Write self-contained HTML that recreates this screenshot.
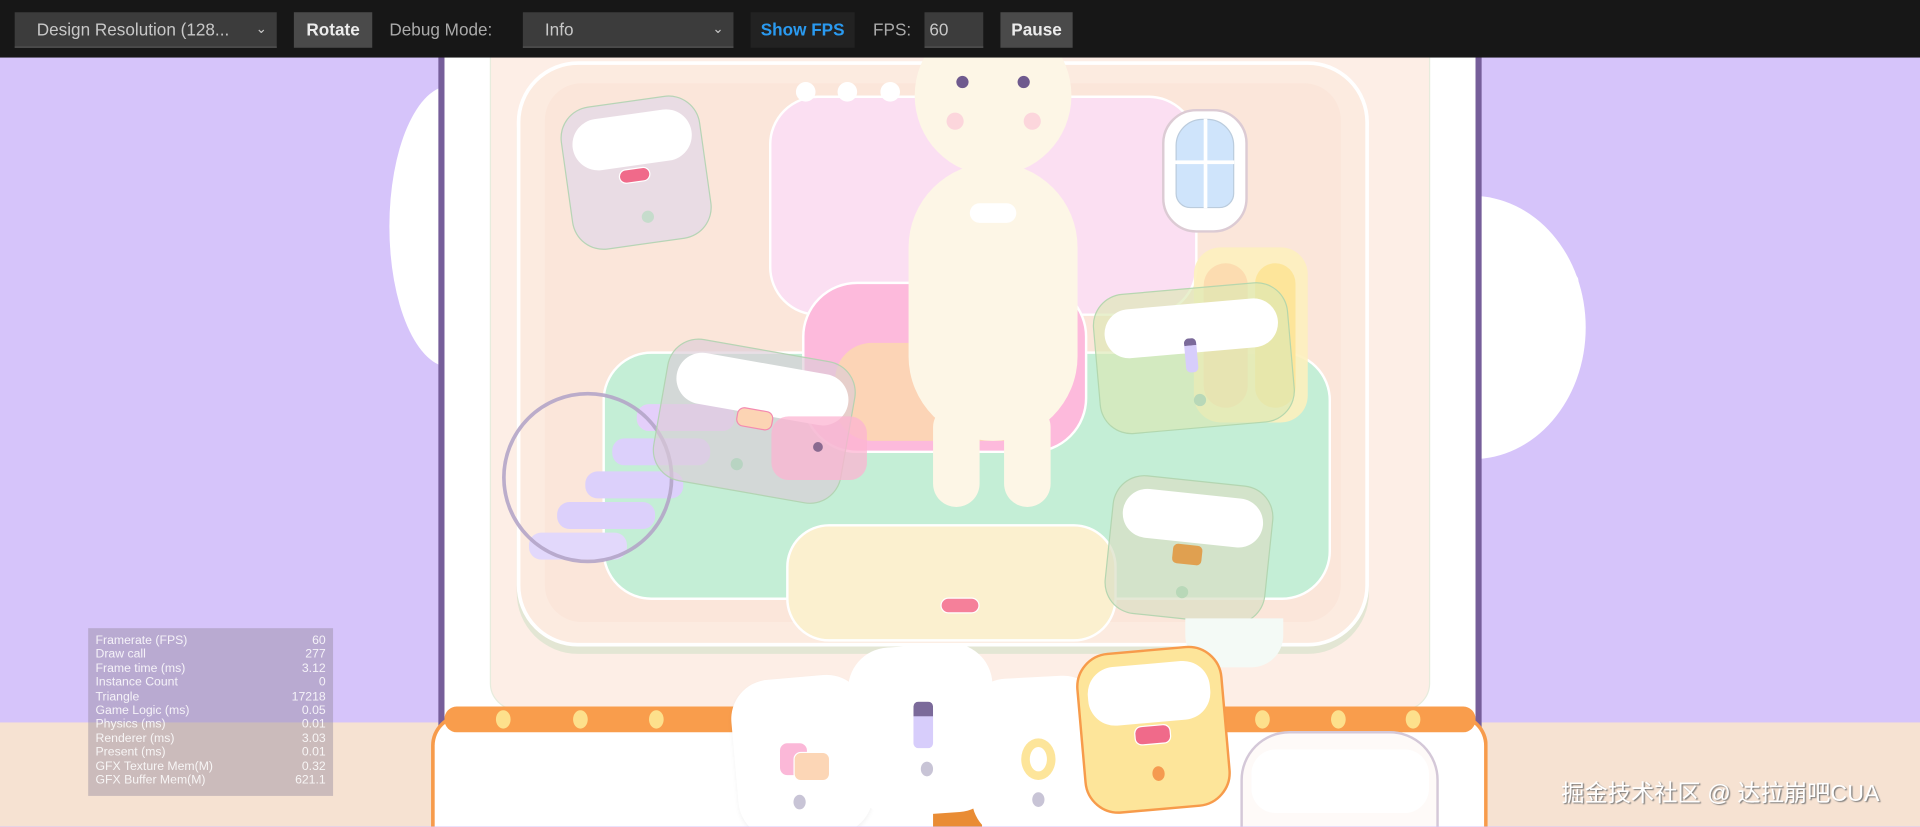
<!DOCTYPE html>
<html><head><meta charset="utf-8"><style>
*{margin:0;padding:0;box-sizing:border-box}
html,body{width:1920px;height:827px;overflow:hidden;background:#d6c4fa}
#w{position:absolute;left:0;top:0;width:1568px;height:675px;transform:scale(1.22449);transform-origin:0 0;overflow:hidden;font-family:"Liberation Sans",sans-serif}
.a{position:absolute}
.tb{left:0;top:0;width:1568px;height:47px;background:#171717}
.sel{background:#3c3c3c;color:#c8c8c8;font-size:14px;line-height:29px;padding-left:18px;height:29px;top:10px;border-bottom:1px solid #555}
.btn{background:#4a4a4a;color:#ececec;font-weight:bold;font-size:14px;line-height:29px;text-align:center;height:29px;top:10px}
.lbl{color:#aaa;font-size:14px;top:16px}
.card{position:absolute;border-radius:26px;border:1.5px solid rgba(170,210,170,.8)}
.pill{position:absolute;background:#fff;border-radius:22px}
.dot{position:absolute;border-radius:50%}
.stats{left:72px;top:513px;width:200px;height:137px;background:rgba(150,140,160,.45);color:rgba(255,255,255,.85);font-size:10px;line-height:11.4px;padding:5px 6px}
.stats div{display:flex;justify-content:space-between}
</style></head><body><div id="w">
<div class="a" style="left:0;top:590px;width:1568px;height:85px;background:#f6e2d2"></div>
<div class="a" style="left:318px;top:70px;width:100px;height:230px;border-radius:50%;background:#fff"></div>
<div class="a" style="left:1110px;top:160px;width:185px;height:215px;border-radius:50%;background:#fff"></div>
<div class="dot" style="left:1279px;top:224px;width:10px;height:10px;background:#fff"></div>
<div class="a" style="left:358px;top:40px;width:852px;height:560px;background:#765e9a"></div>
<div class="a" style="left:363px;top:40px;width:842px;height:560px;background:#fff"></div>
<div class="a" style="left:400px;top:40px;width:768px;height:540px;background:#fdeee6;border-radius:0 0 22px 22px;border:1px solid #e6ecdd"></div>
<div class="a" style="left:422px;top:50px;width:696px;height:478px;background:#fcebe0;border-radius:50px;border:3px solid #fff;box-shadow:0 6px 0 #e3e6d4"></div>
<div class="a" style="left:445px;top:68px;width:650px;height:440px;background:#fbe6da;border-radius:30px"></div>
<div class="a" style="left:628px;top:78px;width:350px;height:180px;background:#fbdff2;border-radius:40px;border:2px solid #fff"></div>
<div class="dot" style="left:650px;top:67px;width:16px;height:16px;background:#fff"></div>
<div class="dot" style="left:684px;top:67px;width:16px;height:16px;background:#fff"></div>
<div class="dot" style="left:719px;top:67px;width:16px;height:16px;background:#fff"></div>
<div class="a" style="left:492px;top:287px;width:595px;height:203px;background:#c4eed6;border-radius:40px;border:2px solid #fff"></div>
<div class="a" style="left:655px;top:230px;width:233px;height:140px;background:#fdbadc;border-radius:45px;border:2px solid #fff"></div>
<div class="a" style="left:682px;top:280px;width:175px;height:80px;background:#fcd4b6;border-radius:30px"></div>
<div class="a" style="left:642px;top:428px;width:270px;height:96px;background:#fbf0cf;border-radius:35px;border:2px solid #fff"></div>
<div class="a" style="left:768px;top:488px;width:32px;height:13px;background:#f5809a;border-radius:7px;border:1.5px solid #fff"></div>
<div class="a" style="left:949px;top:89px;width:70px;height:101px;background:#fff;border-radius:28px;border:2px solid #dccbd4"></div>
<div class="a" style="left:960px;top:97px;width:48px;height:73px;background:#cfe4fb;border-radius:22px 22px 12px 12px;border:1px solid #bcd"></div>
<div class="a" style="left:983px;top:97px;width:3px;height:73px;background:#fff"></div>
<div class="a" style="left:960px;top:131px;width:48px;height:3px;background:#fff"></div>
<div class="a" style="left:975px;top:202px;width:93px;height:143px;background:rgba(253,240,190,.9);border-radius:22px"></div>
<div class="a" style="left:983px;top:215px;width:36px;height:118px;background:#fcdcb0;border-radius:18px"></div>
<div class="a" style="left:1025px;top:215px;width:33px;height:118px;background:#fde59a;border-radius:18px"></div>
<div class="a" style="left:520px;top:330px;width:80px;height:22px;background:#e4cffa;border-radius:10px"></div>
<div class="a" style="left:500px;top:358px;width:80px;height:22px;background:#dcd0fb;border-radius:10px"></div>
<div class="a" style="left:478px;top:385px;width:80px;height:22px;background:#dcd0fb;border-radius:10px"></div>
<div class="a" style="left:455px;top:410px;width:80px;height:22px;background:#dcd0fb;border-radius:10px"></div>
<div class="a" style="left:432px;top:435px;width:80px;height:22px;background:#e2d8fb;border-radius:10px"></div>
<div class="dot" style="left:410px;top:320px;width:140px;height:140px;border:3px solid rgba(180,165,200,.9)"></div>
<div class="a" style="left:747px;top:13px;width:128px;height:130px;border-radius:50%;background:#fdf6e6"></div>
<div class="dot" style="left:781px;top:62px;width:10px;height:10px;background:#6f5a8e"></div>
<div class="dot" style="left:831px;top:62px;width:10px;height:10px;background:#6f5a8e"></div>
<div class="dot" style="left:773px;top:92px;width:14px;height:14px;background:#fcd6dc"></div>
<div class="dot" style="left:836px;top:92px;width:14px;height:14px;background:#fcd6dc"></div>
<div class="a" style="left:742px;top:133px;width:138px;height:227px;border-radius:70px;background:#fdf6e6"></div>
<div class="a" style="left:792px;top:166px;width:38px;height:16px;border-radius:8px;background:#fff"></div>
<div class="a" style="left:762px;top:330px;width:38px;height:84px;border-radius:19px;background:#fdf6e6"></div>
<div class="a" style="left:820px;top:330px;width:38px;height:84px;border-radius:19px;background:#fdf6e6"></div>
<div class="card" style="left:462px;top:82px;width:115px;height:118px;background:rgba(225,215,232,.7);transform:rotate(-8deg)"><div class="pill" style="left:8px;top:10px;width:98px;height:42px"></div><div class="a" style="left:42px;top:54px;width:26px;height:12px;background:#f06a8a;border-radius:6px;border:1px solid #fff"></div><div class="dot" style="left:56px;top:90px;width:10px;height:10px;background:#c6dccc"></div></div>
<div class="card" style="left:538px;top:285px;width:156px;height:118px;background:rgba(220,205,215,.65);transform:rotate(10deg)"><div class="pill" style="left:8px;top:10px;width:142px;height:42px"></div><div class="a" style="left:62px;top:48px;width:30px;height:16px;background:#fcd4b4;border-radius:6px;border:1.5px solid #f48ab0"></div><div class="dot" style="left:64px;top:90px;width:10px;height:10px;background:#b8d4c2"></div></div>
<div class="a" style="left:630px;top:340px;width:78px;height:52px;background:rgba(252,180,210,.75);border-radius:14px"></div>
<div class="dot" style="left:664px;top:361px;width:8px;height:8px;background:#8a6a90"></div>
<div class="card" style="left:895px;top:235px;width:160px;height:115px;background:rgba(220,232,180,.65);transform:rotate(-5deg)"><div class="pill" style="left:8px;top:12px;width:142px;height:40px"></div><div class="a" style="left:72px;top:40px;width:10px;height:28px;background:#d7cdfb;border-radius:4px;border-top:6px solid #7b6a9a"></div><div class="dot" style="left:76px;top:86px;width:10px;height:10px;background:#b8d8b8"></div></div>
<div class="card" style="left:905px;top:392px;width:132px;height:114px;background:rgba(218,222,196,.7);transform:rotate(6deg)"><div class="pill" style="left:8px;top:10px;width:115px;height:40px"></div><div class="a" style="left:52px;top:52px;width:24px;height:16px;background:#e0a050;border-radius:4px"></div><div class="dot" style="left:58px;top:86px;width:10px;height:10px;background:#b8d8b8"></div></div>
<div class="a" style="left:352px;top:583px;width:863px;height:120px;border:3px solid #f79b4b;border-bottom:none;border-radius:26px 26px 0 0;background:#fff"></div>
<div class="a" style="left:363px;top:577px;width:842px;height:21px;background:#f99d4c;border-radius:10px"></div>
<div class="dot" style="left:405px;top:580px;width:12px;height:15px;background:#fde08c"></div>
<div class="dot" style="left:468px;top:580px;width:12px;height:15px;background:#fde08c"></div>
<div class="dot" style="left:530px;top:580px;width:12px;height:15px;background:#fde08c"></div>
<div class="dot" style="left:1025px;top:580px;width:12px;height:15px;background:#fde08c"></div>
<div class="dot" style="left:1087px;top:580px;width:12px;height:15px;background:#fde08c"></div>
<div class="dot" style="left:1148px;top:580px;width:12px;height:15px;background:#fde08c"></div>
<div class="a" style="left:968px;top:505px;width:80px;height:40px;background:#f4faf6;border-radius:0 0 26px 26px"></div>
<div class="a" style="left:1013px;top:597px;width:162px;height:100px;background:#fefaf8;border:2px solid #d4c8d8;border-radius:40px 40px 0 0"></div>
<div class="a" style="left:1022px;top:612px;width:145px;height:52px;background:#fff;border-radius:20px"></div>
<div class="a" style="left:600px;top:553px;width:110px;height:130px;background:#fff;border-radius:32px;transform:rotate(-5deg);box-shadow:0 2px 4px rgba(0,0,0,.05)"></div>
<div class="a" style="left:637px;top:607px;width:22px;height:26px;background:#fbb8d8;border-radius:6px"></div>
<div class="a" style="left:648px;top:614px;width:30px;height:24px;background:#fcd6b6;border-radius:6px;border:1.5px solid #fff"></div>
<div class="dot" style="left:648px;top:649px;width:10px;height:12px;background:#c8c4d6"></div>
<div class="a" style="left:762px;top:650px;width:40px;height:30px;background:#e98c34"></div>
<div class="a" style="left:695px;top:527px;width:118px;height:138px;background:#fff;border-radius:34px;transform:rotate(-4deg)"></div>
<div class="a" style="left:746px;top:573px;width:16px;height:38px;background:#d7cdfb;border-radius:4px;border-top:12px solid #7b6a9a"></div>
<div class="dot" style="left:752px;top:622px;width:10px;height:12px;background:#c8c4d6"></div>
<div class="a" style="left:792px;top:553px;width:110px;height:130px;background:#fff;border-radius:32px;transform:rotate(-3deg)"></div>
<div class="dot" style="left:834px;top:603px;width:28px;height:34px;border:7px solid #fde59a;background:#fff"></div>
<div class="dot" style="left:843px;top:647px;width:10px;height:12px;background:#c8c4d6"></div>
<div class="a" style="left:882px;top:530px;width:120px;height:132px;background:#fde59a;border:2.5px solid #f79b4b;border-radius:28px;transform:rotate(-5deg)"><div class="pill" style="left:7px;top:10px;width:100px;height:48px"></div><div class="a" style="left:42px;top:60px;width:30px;height:16px;background:#f06a8a;border-radius:6px;border:1px solid #fff"></div><div class="dot" style="left:54px;top:94px;width:10px;height:12px;background:#f59a50"></div></div>
<div class="a stats">
<div><span>Framerate (FPS)</span><span>60</span></div>
<div><span>Draw call</span><span>277</span></div>
<div><span>Frame time (ms)</span><span>3.12</span></div>
<div><span>Instance Count</span><span>0</span></div>
<div><span>Triangle</span><span>17218</span></div>
<div><span>Game Logic (ms)</span><span>0.05</span></div>
<div><span>Physics (ms)</span><span>0.01</span></div>
<div><span>Renderer (ms)</span><span>3.03</span></div>
<div><span>Present (ms)</span><span>0.01</span></div>
<div><span>GFX Texture Mem(M)</span><span>0.32</span></div>
<div><span>GFX Buffer Mem(M)</span><span>621.1</span></div>
</div>
<div class="a" style="left:1275px;top:633px;color:#fff;font-size:19px;font-family:'Liberation Sans','Noto Sans CJK SC',sans-serif;text-shadow:1px 1px 1px #777;white-space:nowrap">掘金技术社区 @ 达拉崩吧CUA</div>
<div class="a tb"></div>
<div class="a sel" style="left:12px;width:214px">Design Resolution (128...<span style="position:absolute;right:8px;font-size:11px">&#8964;</span></div>
<div class="a btn" style="left:240px;width:64px">Rotate</div>
<div class="a lbl" style="left:318px">Debug Mode:</div>
<div class="a sel" style="left:427px;width:172px">Info<span style="position:absolute;right:8px;font-size:11px">&#8964;</span></div>
<div class="a btn" style="left:613px;width:85px;background:#222;color:#2a9af0">Show FPS</div>
<div class="a lbl" style="left:713px">FPS:</div>
<div class="a sel" style="left:755px;width:48px;padding-left:4px">60</div>
<div class="a btn" style="left:817px;width:59px">Pause</div>
</div></body></html>
